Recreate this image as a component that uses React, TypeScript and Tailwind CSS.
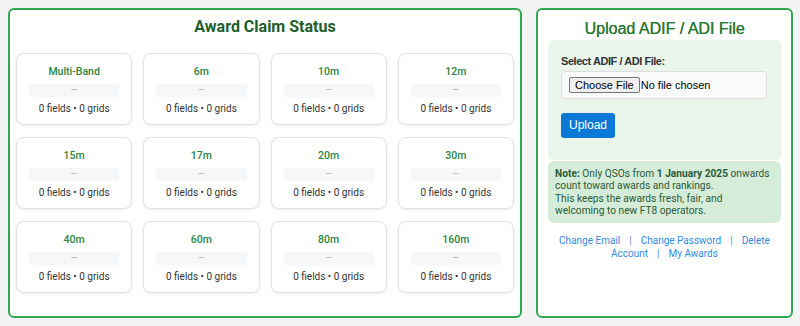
import React from "react";

const bands = ["Multi-Band", "6m", "10m", "12m", "15m", "17m", "20m", "30m", "40m", "60m", "80m", "160m"];

function Card({ name }: { name: string }) {
  return (
    <div className="h-[72px] rounded-lg border border-[#e2e2e2] bg-white shadow-[0_1px_3px_rgba(0,0,0,0.08)] flex flex-col items-center pt-[10px]">
      <div className="text-[10.5px] leading-[16px] font-medium text-[#2a8540]">{name}</div>
      <div className="mt-[4px] h-[13px] w-[calc(100%-24px)] bg-[#f5f7f9] flex items-center justify-center text-[9px] leading-[13px] text-[#b0b0b0]">
        —
      </div>
      <div className="mt-[4px] text-[10px] leading-[16px] text-[#333]">0 fields • 0 grids</div>
    </div>
  );
}

export default function App() {
  return (
    <div className="w-[800px] h-[326px] bg-[#f4f4f4] flex gap-[14px] pl-[8px] pt-[8px] font-['Roboto',sans-serif]">
      <div className="w-[514px] h-[310px] bg-white border-2 border-[#2fa84f] rounded-md flex flex-col">
        <h2 className="pt-[5px] text-center text-[16px] leading-[24px] font-bold text-[#1e5e2a]">Award Claim Status</h2>
        <div className="mt-[14px] px-[6px] grid grid-cols-4 gap-x-[11px] gap-y-[12px]">
          {bands.map((b) => (
            <Card key={b} name={b} />
          ))}
        </div>
      </div>
      <div className="w-[257px] h-[310px] bg-white border-2 border-[#2fa84f] rounded-md flex flex-col px-[10px]">
        <h2 className="pt-[9px] text-center text-[16px] leading-[20px] font-['Liberation_Sans',Arial,sans-serif] text-[#2b7a33] [text-shadow:0.3px_0_0_#2b7a33]">
          Upload ADIF / ADI File
        </h2>
        <div className="mt-[1px] h-[120px] bg-[#eaf5ec] rounded-md shadow-[1px_0_2px_rgba(0,0,0,0.05)] px-[13px] pt-[14px] font-['Liberation_Sans',Arial,sans-serif]">
          <div className="text-[11px] leading-[14px] font-bold tracking-[-0.45px] text-[#333]">Select ADIF / ADI File:</div>
          <div className="mt-[3px] w-[206px] h-[28px] bg-[#f9fafb] border border-[#dedede] rounded flex items-center pl-[7px]">
            <span className="h-[16px] px-[5px] bg-[#efefef] border border-[#767676] rounded-[2px] text-[11px] leading-[14px] text-black flex items-center">
              Choose File
            </span>
            <span className="ml-[1px] text-[11px] text-black">No file chosen</span>
          </div>
          <button className="mt-[14px] w-[54px] h-[25px] bg-[#0a78d7] rounded-[3px] text-white text-[12px] leading-[25px] text-center">
            Upload
          </button>
        </div>
        <div className="mt-[1px] h-[62px] bg-[#d5ecd9] rounded-md pl-[7px] pr-[8px] pt-[7px] text-[10.2px] leading-[12.3px] text-[#2b5a36]">
          <b>Note:</b> Only QSOs from <b>1 January 2025</b> onwards count toward awards and rankings.
          <br />
          This keeps the awards fresh, fair, and welcoming to new FT8 operators.
        </div>
        <div className="mt-[12px] px-[6px] text-center text-[10px] leading-[12.7px] text-[#2f8ae2]">
          <span>Change Email</span>
          <span className="mx-[9px] text-[#5a8fd0]">|</span>
          <span>Change Password</span>
          <span className="mx-[9px] text-[#5a8fd0]">|</span>
          <span>Delete</span> <span>Account</span>
          <span className="mx-[9px] text-[#5a8fd0]">|</span>
          <span>My Awards</span>
        </div>
      </div>
    </div>
  );
}
